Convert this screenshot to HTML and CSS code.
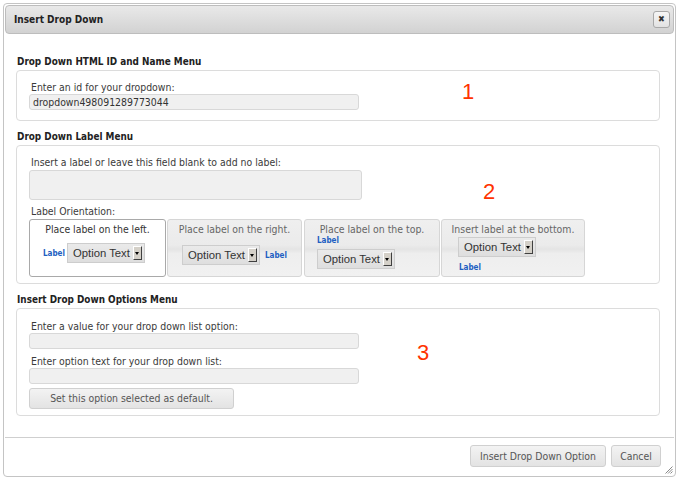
FILE: index.html
```html
<!DOCTYPE html>
<html>
<head>
<meta charset="utf-8">
<link rel="stylesheet" href="styles.css">
</head>
<body>
<div class="dialog">
  <div class="titlebar">
    <span class="title">Insert Drop Down</span>
    <span class="close">&#x2716;</span>
  </div>
  <div class="content">
    <div class="sect-title">Drop Down HTML ID and Name Menu</div>
    <div class="fieldset fs-1">
      <div class="lbl">Enter an id for your dropdown:</div>
      <div class="input input-id">dropdown498091289773044</div>
      <span class="num num-1">1</span>
    </div>

    <div class="sect-title">Drop Down Label Menu</div>
    <div class="fieldset fs-2">
      <div class="lbl">Insert a label or leave this field blank to add no label:</div>
      <div class="input input-label"></div>
      <div class="lbl lbl-orient">Label Orientation:</div>
      <div class="orient-row">
        <div class="orient orient-left active">
          <div class="orient-title">Place label on the left.</div>
          <div class="demo demo-inline">
            <span class="demo-label">Label</span>
            <span class="sel"><span class="sel-text">Option Text</span><span class="sel-btn"></span></span>
          </div>
        </div>
        <div class="orient orient-right">
          <div class="orient-title">Place label on the right.</div>
          <div class="demo demo-inline">
            <span class="sel"><span class="sel-text">Option Text</span><span class="sel-btn"></span></span>
            <span class="demo-label">Label</span>
          </div>
        </div>
        <div class="orient orient-top">
          <div class="orient-title">Place label on the top.</div>
          <div class="demo demo-stack">
            <span class="demo-label">Label</span>
            <span class="sel"><span class="sel-text">Option Text</span><span class="sel-btn"></span></span>
          </div>
        </div>
        <div class="orient orient-bottom">
          <div class="orient-title">Insert label at the bottom.</div>
          <div class="demo demo-stack">
            <span class="sel"><span class="sel-text">Option Text</span><span class="sel-btn"></span></span>
            <span class="demo-label">Label</span>
          </div>
        </div>
      </div>
      <span class="num num-2">2</span>
    </div>

    <div class="sect-title">Insert Drop Down Options Menu</div>
    <div class="fieldset fs-3">
      <div class="lbl">Enter a value for your drop down list option:</div>
      <div class="input input-opt"></div>
      <div class="lbl lbl-second">Enter option text for your drop down list:</div>
      <div class="input input-opt"></div>
      <div class="btn btn-default">Set this option selected as default.</div>
      <span class="num num-3">3</span>
    </div>
  </div>
  <div class="footer">
    <div class="btn btn-foot btn-insert">Insert Drop Down Option</div>
    <div class="btn btn-foot btn-cancel">Cancel</div>
    <svg class="grip" width="8" height="8" viewBox="0 0 8 8">
      <path d="M7.5 0.5 L0.5 7.5 M7.5 3 L3 7.5 M7.5 5.5 L5.5 7.5" stroke="#888" stroke-width="1" fill="none"/>
    </svg>
  </div>
</div>
</body>
</html>
```

FILE: styles.css
```css
* { box-sizing: border-box; }
html, body { margin: 0; padding: 0; background: #fff; }
body {
  font-family: "DejaVu Sans Condensed", "DejaVu Sans", sans-serif;
  font-size: 10.4px;
  color: #333;
  width: 678px;
  height: 479px;
  overflow: hidden;
}
.dialog {
  position: relative;
  margin: 3px 0 0 3px;
  width: 673px;
  height: 474px;
  border: 1px solid #c4c4c4;
  border-radius: 4px;
  padding: 1px;
  background: #fff;
  display: flex;
  flex-direction: column;
}
.titlebar {
  height: 29px;
  border: 1px solid #bdbdbd;
  border-radius: 4px;
  background: linear-gradient(#e9e9e9, #d2d2d2);
  display: flex;
  align-items: center;
  justify-content: space-between;
  padding: 0 3px 0 8px;
  flex-shrink: 0;
}
.title {
  font-weight: bold;
  font-size: 10px;
  color: #222;
}
.close {
  width: 17px;
  height: 17px;
  border: 1px solid #a8a8a8;
  border-radius: 3px;
  background: linear-gradient(#f6f6f6, #e2e2e2);
  font-size: 9px;
  line-height: 15px;
  text-align: center;
  color: #333;
}
.content {
  flex: 1;
  padding: 20px 14px 0 11px;
}
.sect-title {
  font-weight: bold;
  font-size: 9.9px;
  line-height: 16px;
  height: 16px;
  color: #222;
  padding-left: 1px;
}
.fieldset {
  position: relative;
  border: 1px solid #dcdcdc;
  border-radius: 4px;
  padding: 9px 12px 10px 12px;
  margin-bottom: 8px;
}
.fs-1 { height: 51px; }
.fs-2 { height: 139px; }
.fs-3 { height: 108px; padding-top: 10px; }
.lbl {
  line-height: 14px;
  padding-left: 2px;
  color: #3a3a3a;
}
.input {
  border: 1px solid #d8d8d8;
  border-radius: 3px;
  background: #f0f0f0;
  color: #333;
  line-height: 14px;
  padding-left: 3px;
}
.input-id { width: 330px; height: 16px; }
.input-label { width: 333px; height: 30px; margin-top: 1px; }
.input-opt { width: 330px; height: 16px; }
.lbl-orient { margin-top: 4px; }
.lbl-second { margin-top: 5px; }
.orient-row {
  display: flex;
  gap: 1px;
  height: 58px;
  margin-top: 1px;
}
.orient {
  border: 1px solid #d6d6d6;
  border-radius: 3px;
  background: linear-gradient(#efefef 0%, #ebebeb 45%, #e4e4e4 52%, #eeeeee 60%, #f1f1f1 100%);
  color: #666;
  flex-shrink: 0;
}
.orient.active {
  background: #fff;
  border-color: #a9a9a9;
  color: #333;
}
.orient-left { width: 137px; }
.orient-right { width: 135px; }
.orient-top { width: 136px; margin-left: 1px; }
.orient-bottom { width: 144px; }
.orient-title {
  text-align: center;
  line-height: 13px;
  margin-top: 3px;
  white-space: nowrap;
}
.demo-inline {
  display: flex;
  align-items: center;
  justify-content: center;
  gap: 2px;
}
.orient-left .demo { margin-top: 7px; justify-content: flex-start; padding-left: 13px; }
.orient-right .demo { margin-top: 9px; gap: 5px; }
.demo-stack {
  display: flex;
  flex-direction: column;
  align-items: flex-start;
}
.orient-top .demo { padding-left: 12px; margin-top: 0; }
.orient-top .demo-label { line-height: 10px; margin-bottom: 3px; }
.orient-bottom .demo { padding-left: 16px; margin-top: 1px; }
.orient-bottom .demo-label { line-height: 10px; margin-top: 6px; padding-left: 1px; }
.demo-label {
  font-weight: bold;
  font-size: 8px;
  color: #1e5fc2;
}
.sel {
  display: inline-flex;
  align-items: center;
  flex-shrink: 0;
  width: 78px;
  height: 20px;
  border: 1px solid #cdcdcd;
  background: linear-gradient(#eaeaea, #dedede);
  padding: 0 2px 0 5px;
  justify-content: space-between;
  white-space: nowrap;
}
.sel-text {
  font-family: "Liberation Sans", Arial, sans-serif;
  font-size: 11.3px;
  color: #333;
}
.sel-btn {
  position: relative;
  flex-shrink: 0;
  width: 9px;
  height: 14px;
  background: #d4d0c8;
  border-top: 1px solid #fff;
  border-left: 1px solid #fff;
  border-right: 1px solid #404040;
  border-bottom: 1px solid #404040;
}
.sel-btn::after {
  content: "";
  position: absolute;
  left: 1px;
  top: 5px;
  border-left: 2.5px solid transparent;
  border-right: 2.5px solid transparent;
  border-top: 3px solid #000;
}
.num {
  position: absolute;
  font-family: "Liberation Sans", Arial, sans-serif;
  font-size: 22px;
  color: #ff3300;
  line-height: 22px;
}
.num-1 { left: 445px; top: 10px; }
.num-2 { left: 466px; top: 35px; }
.num-3 { left: 400px; top: 33px; }
.btn {
  border: 1px solid #d0d0d0;
  border-radius: 3px;
  background: linear-gradient(#f3f3f3, #e3e3e3);
  color: #555;
  text-align: center;
  white-space: nowrap;
}
.btn-default {
  margin-top: 4px;
  width: 205px;
  height: 21px;
  line-height: 19px;
}
.footer {
  height: 38px;
  flex-shrink: 0;
  border-top: 1px solid #cfcfcf;
  display: flex;
  justify-content: flex-end;
  align-items: flex-start;
  padding: 7px 13px 0 0;
  gap: 5px;
  position: relative;
}
.btn-foot {
  height: 22px;
  line-height: 20px;
  padding: 0;
}
.btn-insert { width: 136px; }
.btn-cancel { width: 50px; }
.grip {
  position: absolute;
  right: 1px;
  bottom: 1px;
}
```
